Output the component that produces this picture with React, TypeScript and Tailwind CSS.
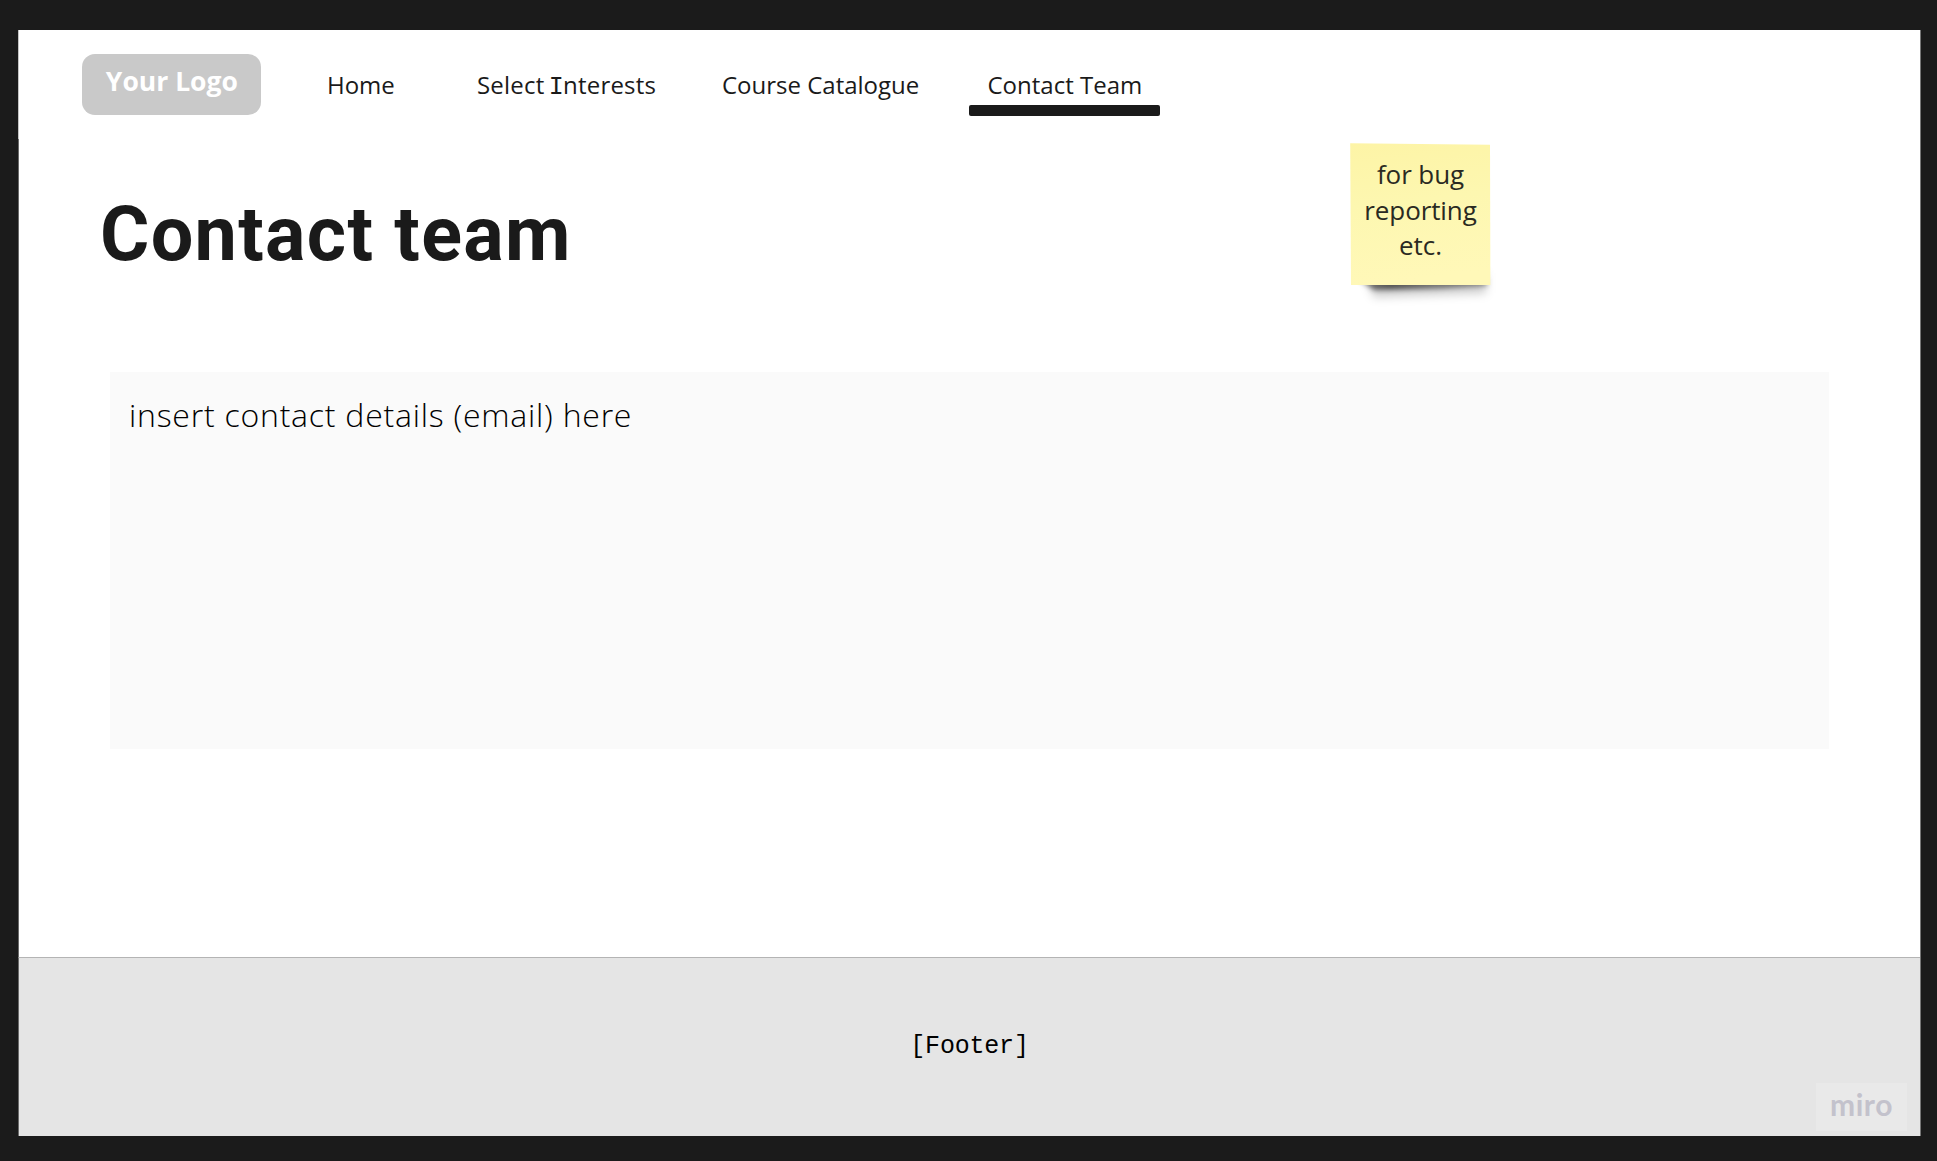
import React from "react";

function StickyNote() {
  return (
    <div className="absolute left-[1332px] top-[103px] h-[176px] w-[160px]">
      <svg className="absolute inset-0" width="160" height="176" viewBox="0 0 160 176" aria-hidden="true">
        <defs>
          <linearGradient id="paper" x1="0" y1="0" x2="0.12" y2="1">
            <stop offset="0" stopColor="#fdf4a6" />
            <stop offset="0.45" stopColor="#fdf7b0" />
            <stop offset="1" stopColor="#fff8b8" />
          </linearGradient>
          <linearGradient id="fade" x1="0" y1="0" x2="1" y2="0">
            <stop offset="0" stopColor="#000" stopOpacity="0.4" />
            <stop offset="0.25" stopColor="#000" stopOpacity="0.6" />
            <stop offset="0.6" stopColor="#000" stopOpacity="0.45" />
            <stop offset="1" stopColor="#000" stopOpacity="0.4" />
          </linearGradient>
          <filter id="soft" x="-20%" y="-80%" width="140%" height="260%">
            <feGaussianBlur stdDeviation="2.8" />
          </filter>
          <filter id="wide" x="-20%" y="-80%" width="140%" height="260%">
            <feGaussianBlur stdDeviation="5" />
          </filter>
        </defs>
        <path d="M14 140 H136 V160 L24 164 Z" fill="#000" fillOpacity="0.2" filter="url(#wide)" />
        <path d="M8 146 H137 V152.5 L90 155.5 L24 157 Z" fill="url(#fade)" filter="url(#soft)" />
        <path d="M0.2 10.2 L140 11.8 L140.4 152 L1 152 Z" fill="url(#paper)" />
      </svg>
      <p className="absolute left-0 top-[24px] w-[141px] text-center text-[26px] leading-[35.5px] tracking-[-0.1px] text-[#2a2a22]">
        for bug
        <br />
        reporting
        <br />
        etc.
      </p>
    </div>
  );
}

export default function App() {
  return (
    <div className="h-[1161px] w-[1937px] overflow-hidden bg-[#1b1b1b] pl-[18px] pt-[30px] font-['Open_Sans',sans-serif] text-[#1a1a1a]">
      <div className="relative flex h-[1106px] w-[1903px] flex-col border-r border-[#777777] bg-white">
        <header className="flex h-[109px] items-start border-l border-[#c4c4c4] pl-[63.4px] pt-[24px]">
          <div className="flex h-[61px] w-[179px] justify-center rounded-[13px] bg-[#c9c9c9] pt-[9px]">
            <span className="text-[26.5px] font-bold leading-[36px] text-white">Your Logo</span>
          </div>
          <nav className="flex whitespace-nowrap pt-[17px] text-[24px] leading-[28px]">
            <a className="ml-[65.6px] w-[150px]">Home</a>
            <a className="w-[245px] tracking-[0.2px]">
              Select{" "}
              <span className="-ml-[2px] -mr-px font-['Liberation_Mono',monospace] text-[25px] leading-[0]">I</span>
              nterests
            </a>
            <a className="w-[247px]">Course Catalogue</a>
            <a className="flex w-[192px] flex-col">
              <span className="pl-[18.5px]">Contact Team</span>
              <span className="mt-[6px] h-[11px] w-[191px] rounded-[2px] bg-[#1a1a1a]" />
            </a>
          </nav>
        </header>
        <main className="flex h-[818px] flex-col border-l border-[#6a6a6a] pl-[91px] pt-[55px]">
          <h1 className="-ml-[10px] font-['Roboto',sans-serif] text-[75.5px] font-bold leading-[80px] tracking-[1.3px]">
            Contact team
          </h1>
          <section className="mt-[98px] h-[377px] w-[1719px] bg-[#fafafa] pl-[19px] pt-[23px]">
            <p className="text-[32px] font-light leading-[40px] tracking-[0.77px] text-black">
              insert contact details (email) here
            </p>
          </section>
        </main>
        <footer className="flex flex-1 justify-center border-l border-t border-l-[#6a6a6a] border-t-[#b4b4b4] bg-[#e5e5e5] pt-[75px]">
          <span className="font-['Liberation_Mono',monospace] text-[25px] leading-[28px] tracking-[-0.2px] text-black">
            [Footer]
          </span>
        </footer>
        <StickyNote />
        <div className="absolute bottom-[5px] right-[13px] flex h-[48px] w-[91px] justify-center bg-[#e9e9e9] pt-[3px]">
          <span className="font-['Lato',sans-serif] text-[30px] font-bold leading-[36px] tracking-[0.6px] text-[#c3c2cc]">
            miro
          </span>
        </div>
      </div>
    </div>
  );
}
